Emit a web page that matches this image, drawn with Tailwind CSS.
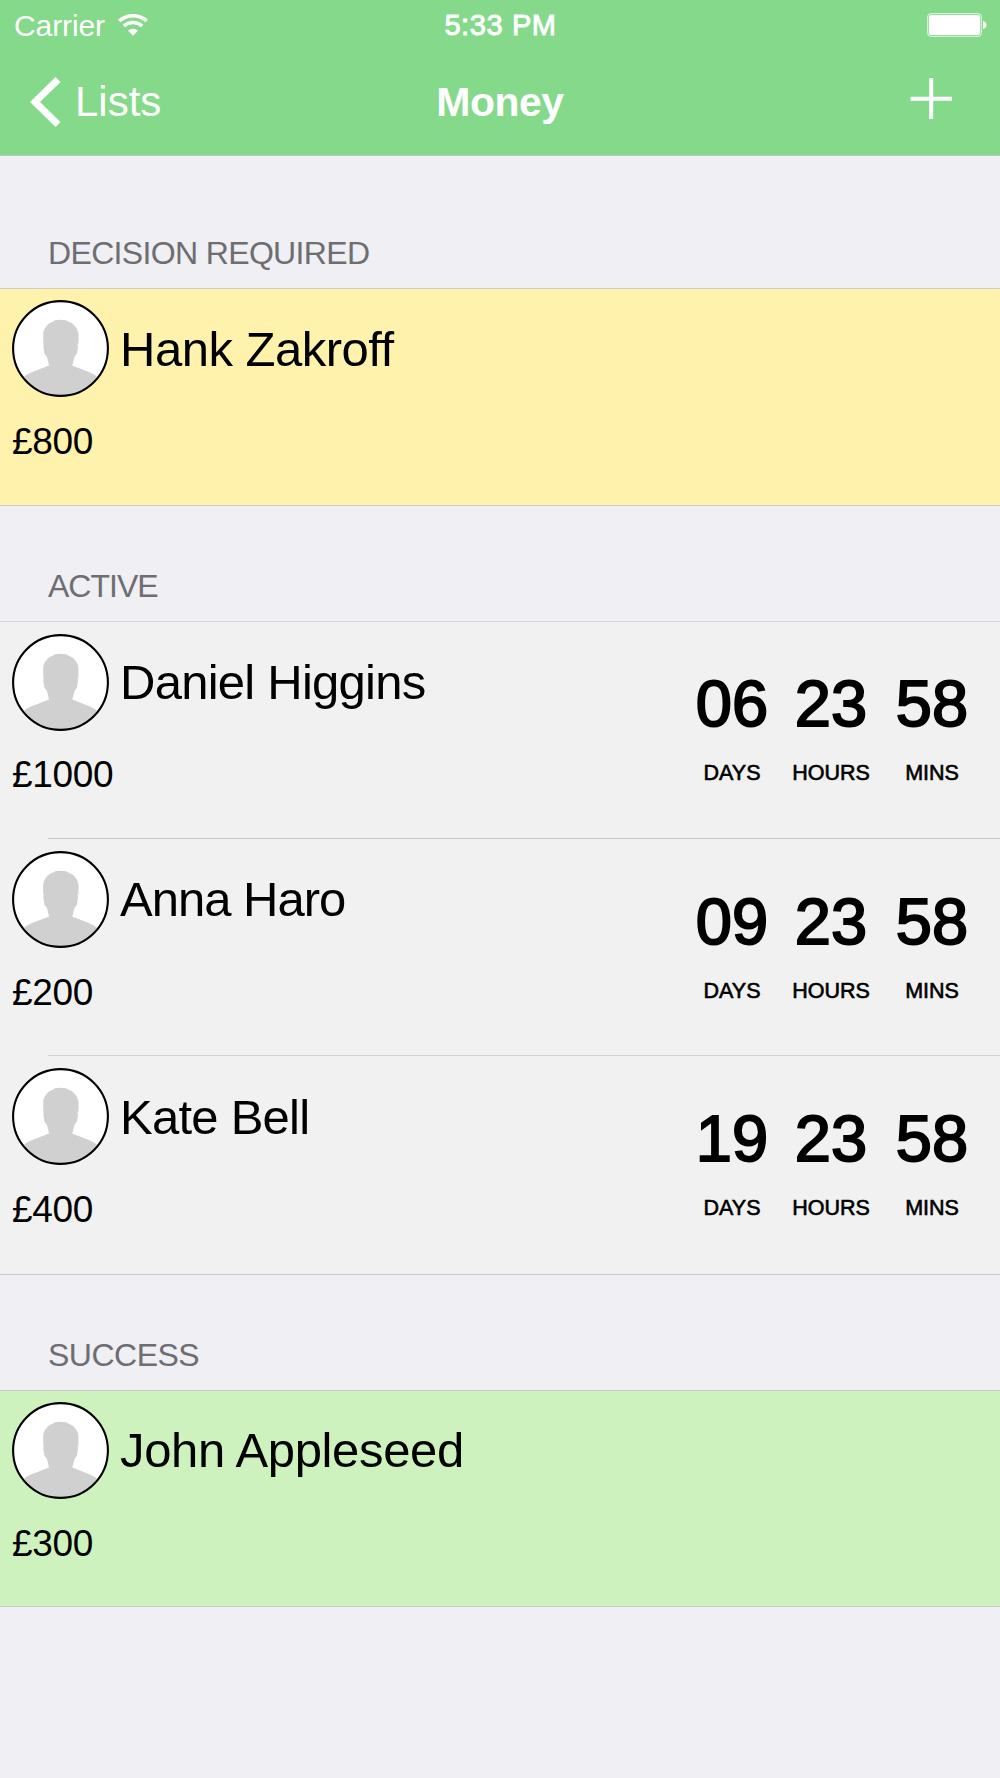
<!DOCTYPE html>
<html lang="en">
<head>
<meta charset="utf-8">
<title>Money</title>
<script src="https://cdn.jsdelivr.net/npm/@tailwindcss/browser@4"></script>
</head>
<body class="w-[1000px] h-[1778px] overflow-hidden bg-[#efeff4] text-black font-['Liberation_Sans',Arial,sans-serif]">
<svg class="hidden">
  <symbol id="avatar" viewBox="0 0 97 97">
    <circle cx="48.5" cy="48.5" r="47.5" fill="#fff"/>
    <path fill="#d0d0d0" d="M43 20.300C46 19.600 51 19.600 54 20.300L56 21.600C61.500 23 66 28.500 66.500 34L66.500 42.500L65.500 44.500L66 46L65 53.500L62.500 57L60.300 65.500L78 72.500Q82.500 74 85.200 77A46.500 46.500 0 0 1 12 77Q14 74.500 19 72.500L37 65.500L35 57L32.400 53.500L31.200 46L31.800 44.500L31.200 42.500V34C31.500 28.500 36 23 41.300 21.600Z"/>
    <circle cx="48.5" cy="48.5" r="47.4" fill="none" stroke="#000" stroke-width="2.100"/>
  </symbol>
</svg>

<header class="h-[156px] bg-[#84d98b] border-b border-[#b9c9bd] text-white">
  <div class="h-[50px] grid grid-cols-3 items-center pl-[14px] pr-[13px]">
    <div class="flex items-center gap-[13px]">
      <span class="text-[30px] leading-[50px] tracking-[-0.1px]">Carrier</span>
      <svg class="w-[30px] h-[23px] -mt-px" viewBox="0 0 30 23" fill="none" stroke="#fff">
        <path d="M1.300 7A20.500 20.500 0 0 1 28.700 7" stroke-width="3.600"/>
        <path d="M5.800 12A14 14 0 0 1 24.200 12" stroke-width="3.400"/>
        <path d="M15 21.800L10 16.800Q15 12.800 20 16.800Z" fill="#fff" stroke="none"/>
      </svg>
    </div>
    <div class="text-center text-[29px] leading-[51px] tracking-[0.6px] [-webkit-text-stroke:.9px_white]">5:33 PM</div>
    <svg class="justify-self-end -mt-px w-[60px] h-[24px]" viewBox="0 0 60 24">
      <rect x=".7" y=".7" width="53.600" height="22.600" rx="3.500" fill="none" stroke="#fff" stroke-opacity=".65" stroke-width="1.300"/>
      <rect x="2" y="2" width="51" height="20" rx="2" fill="#fff"/>
      <path d="M56 8Q59.500 9 59.500 12T56 16Z" fill="#fff"/>
    </svg>
  </div>
  <div class="h-[105px] grid grid-cols-3 items-start pl-[30px] pr-[47px]">
    <div class="flex items-center gap-[14px] h-[104px]">
      <svg class="w-[31px] h-[52px]" viewBox="0 0 31 52"><path d="M28 3.500L5 26L28 48.500" fill="none" stroke="#fff" stroke-width="7"/></svg>
      <span class="text-[42px] leading-[104px]">Lists</span>
    </div>
    <div class="text-center text-[41px] leading-[104px] tracking-[-0.5px] font-bold pl-[17px]">Money</div>
    <svg class="justify-self-end mt-[28px] w-[43px] h-[42px]" viewBox="0 0 43 42" fill="#fff"><path d="M19.200 0h4v18.800H42v4H23.200V41h-4V22.800H.5v-4H19.200Z"/></svg>
  </div>
</header>

<main>
  <section>
    <h2 class="h-[132px] pt-[77px] pl-[48px] text-[32px] leading-[40px] tracking-[-0.65px] text-[#6d6d72]">DECISION REQUIRED</h2>
    <div class="h-[218px] border-y border-[#cfcdc8] bg-[#fff2ad] pl-[12px] pt-[11px]">
      <div class="flex items-center gap-[11px]">
        <svg class="w-[97px] h-[97px]"><use href="#avatar"/></svg>
        <span class="text-[49px] leading-[97px] pt-[2px] -my-px tracking-[-0.5px]">Hank Zakroff</span>
      </div>
      <p class="mt-[24px] text-[37px] leading-[42px] tracking-[-0.3px]">£800</p>
    </div>
  </section>

  <section>
    <h2 class="h-[115px] pt-[60px] pl-[48px] text-[32px] leading-[40px] tracking-[-1px] text-[#6d6d72]">ACTIVE</h2>
    <div class="border-t border-b border-t-[#d5d5d8] border-b-[#c8c7cc] bg-[#f1f1f1]">
      <article class="h-[217px] flex justify-between pl-[12px] pt-[12px] pr-[26px]">
        <div>
          <div class="flex items-center gap-[11px]">
            <svg class="w-[97px] h-[97px]"><use href="#avatar"/></svg>
            <span class="text-[49px] leading-[99px] -my-px tracking-[-0.75px]">Daniel Higgins</span>
          </div>
          <p class="mt-[23px] text-[37px] leading-[42px] tracking-[-0.3px]">£1000</p>
        </div>
        <div class="grid grid-cols-[80px_118px_84px] pt-[34px] text-center content-start [-webkit-text-stroke:2px_black]">
          <b class="text-[65px] leading-[72px] font-normal">06</b><b class="text-[65px] leading-[72px] font-normal">23</b><b class="text-[65px] leading-[72px] font-normal">58</b>
          <span class="mt-[21px] text-[21.5px] leading-[24px] [-webkit-text-stroke:.6px_black]">DAYS</span><span class="mt-[21px] text-[21.5px] leading-[24px] [-webkit-text-stroke:.6px_black]">HOURS</span><span class="mt-[21px] text-[21.5px] leading-[24px] [-webkit-text-stroke:.6px_black]">MINS</span>
        </div>
      </article>
      <div class="h-px -mt-px ml-[48px] bg-[#c8c7cc]"></div>
      <article class="h-[217px] flex justify-between pl-[12px] pt-[12px] pr-[26px]">
        <div>
          <div class="flex items-center gap-[11px]">
            <svg class="w-[97px] h-[97px]"><use href="#avatar"/></svg>
            <span class="text-[49px] leading-[99px] -my-px tracking-[-1px]">Anna Haro</span>
          </div>
          <p class="mt-[24px] text-[37px] leading-[42px] tracking-[-0.3px]">£200</p>
        </div>
        <div class="grid grid-cols-[80px_118px_84px] pt-[35px] text-center content-start [-webkit-text-stroke:2px_black]">
          <b class="text-[65px] leading-[72px] font-normal">09</b><b class="text-[65px] leading-[72px] font-normal">23</b><b class="text-[65px] leading-[72px] font-normal">58</b>
          <span class="mt-[21px] text-[21.5px] leading-[24px] [-webkit-text-stroke:.6px_black]">DAYS</span><span class="mt-[21px] text-[21.5px] leading-[24px] [-webkit-text-stroke:.6px_black]">HOURS</span><span class="mt-[21px] text-[21.5px] leading-[24px] [-webkit-text-stroke:.6px_black]">MINS</span>
        </div>
      </article>
      <div class="h-px -mt-px ml-[48px] bg-[#d2d2d5]"></div>
      <article class="h-[217px] flex justify-between pl-[12px] pt-[12px] pr-[26px]">
        <div>
          <div class="flex items-center gap-[11px]">
            <svg class="w-[97px] h-[97px]"><use href="#avatar"/></svg>
            <span class="text-[49px] leading-[97px] pt-[2px] -my-px tracking-[-0.75px]">Kate Bell</span>
          </div>
          <p class="mt-[24px] text-[37px] leading-[42px] tracking-[-0.3px]">£400</p>
        </div>
        <div class="grid grid-cols-[80px_118px_84px] pt-[35px] text-center content-start [-webkit-text-stroke:2px_black]">
          <b class="text-[65px] leading-[72px] font-normal">19</b><b class="text-[65px] leading-[72px] font-normal">23</b><b class="text-[65px] leading-[72px] font-normal">58</b>
          <span class="mt-[21px] text-[21.5px] leading-[24px] [-webkit-text-stroke:.6px_black]">DAYS</span><span class="mt-[21px] text-[21.5px] leading-[24px] [-webkit-text-stroke:.6px_black]">HOURS</span><span class="mt-[21px] text-[21.5px] leading-[24px] [-webkit-text-stroke:.6px_black]">MINS</span>
        </div>
      </article>
      <div class="h-px"></div>
    </div>
  </section>

  <section>
    <h2 class="h-[115px] pt-[60px] pl-[48px] text-[32px] leading-[40px] tracking-[-0.5px] text-[#6d6d72]">SUCCESS</h2>
    <div class="h-[217px] border-y border-[#c8cbc8] bg-[#cef2bd] pl-[12px] pt-[11px]">
      <div class="flex items-center gap-[11px]">
        <svg class="w-[97px] h-[97px]"><use href="#avatar"/></svg>
        <span class="text-[49px] leading-[99px] -my-px tracking-[-0.35px]">John Appleseed</span>
      </div>
      <p class="mt-[24px] text-[37px] leading-[42px] tracking-[-0.3px]">£300</p>
    </div>
  </section>
</main>
</body>
</html>
